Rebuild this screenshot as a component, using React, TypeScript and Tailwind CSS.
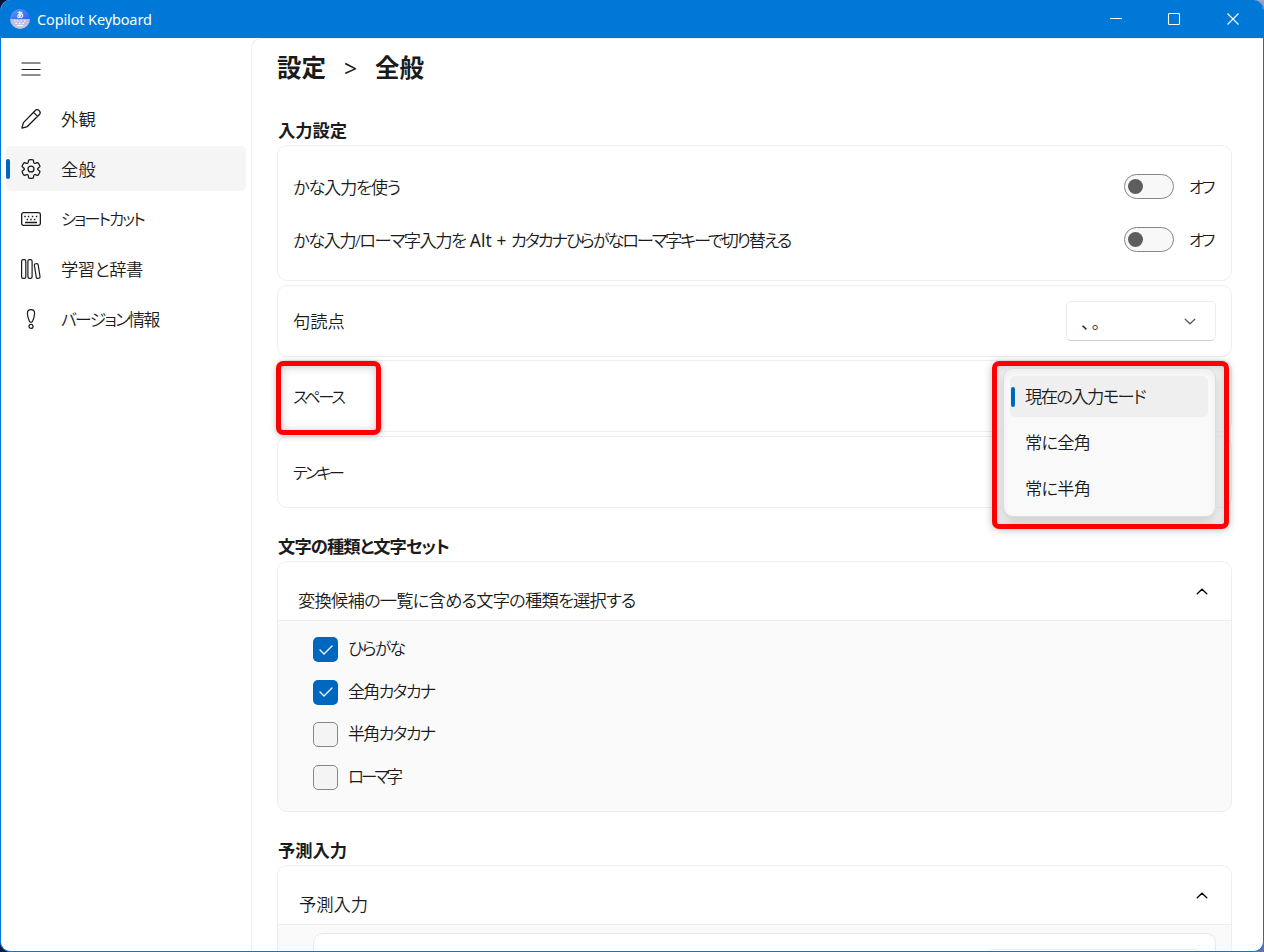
import type { ReactNode } from "react";

const GearIcon = () => (
  <svg className="size-[22px] shrink-0" viewBox="0 0 20 20" fill="none" stroke="currentColor" strokeWidth="1.15">
    <path d="M1.91 7.38A8.5 8.5 0 0 1 3.7 4.3a.5.5 0 0 1 .54-.13l1.92.68a1 1 0 0 0 1.32-.76l.36-2a.5.5 0 0 1 .4-.4 8.53 8.53 0 0 1 3.55 0c.2.04.35.2.38.4l.37 2a1 1 0 0 0 1.32.76l1.92-.68a.5.5 0 0 1 .54.13 8.5 8.5 0 0 1 1.78 3.08c.06.2 0 .4-.15.54l-1.56 1.32a1 1 0 0 0 0 1.52l1.56 1.32a.5.5 0 0 1 .15.54 8.5 8.5 0 0 1-1.78 3.08.5.5 0 0 1-.54.13l-1.92-.68a1 1 0 0 0-1.32.76l-.37 2a.5.5 0 0 1-.38.4 8.53 8.53 0 0 1-3.56 0 .5.5 0 0 1-.39-.4l-.36-2a1 1 0 0 0-1.32-.76l-1.92.68a.5.5 0 0 1-.54-.13 8.5 8.5 0 0 1-1.78-3.08.5.5 0 0 1 .15-.54l1.56-1.32a1 1 0 0 0 0-1.52L2.06 7.92a.5.5 0 0 1-.15-.54Z" />
    <circle cx="10" cy="10" r="2.7" />
  </svg>
);

const PencilIcon = () => (
  <svg className="size-5" viewBox="0 0 20 20" fill="none" stroke="currentColor" strokeWidth="1.3" strokeLinejoin="round">
    <path d="M14 1.7a2.7 2.7 0 0 1 4.2 0 2.9 2.9 0 0 1 0 4.1L6.6 17.3a2 2 0 0 1-.9.5L.9 19.1l1.3-4.8a2 2 0 0 1 .5-.9L14 1.7ZM12.6 3.4l4 4" />
  </svg>
);

const KeyboardIcon = () => (
  <svg className="size-5" viewBox="0 0 20 20" fill="none" stroke="currentColor" strokeWidth="1.3">
    <rect x="0.65" y="3.65" width="18.7" height="12.7" rx="1.8" />
    <path d="M4 13.5h12" />
    <path d="M3.3 7.5h1.5M6.8 7.5h1.5M10.8 7.5h1.5M14.8 7.5h1.5M5.6 10.5h1.5M9.2 10.5h1.5M12.8 10.5h1.5" strokeWidth="1.5" />
  </svg>
);

const BooksIcon = () => (
  <svg className="size-5" viewBox="0 0 20 20" fill="none" stroke="currentColor" strokeWidth="1.2">
    <rect x="0.6" y="0.6" width="4.2" height="18.8" rx="1.6" />
    <rect x="6.9" y="0.6" width="4.2" height="18.8" rx="1.6" />
    <rect x="14.3" y="4.6" width="3.8" height="14.8" rx="1.5" transform="rotate(-9 16.2 12)" />
  </svg>
);

const ImportantIcon = () => (
  <svg className="size-5" viewBox="0 0 20 20" fill="none" stroke="currentColor" strokeWidth="1.2">
    <path d="M10 .6c2.2 0 3.6 1.5 3.6 3.7 0 2.6-1 5.7-2 8-.3.7-.8 1.1-1.6 1.1s-1.3-.4-1.6-1.1c-1-2.3-2-5.4-2-8C6.400 2.100 7.800.6 10 .6Z" />
    <circle cx="10" cy="17.4" r="2" />
  </svg>
);

const Chevron = ({ up = false }: { up?: boolean }) => (
  <svg
    className={up ? "h-[7px] w-3 text-black" : "h-[7px] w-3 text-[#5c5c5c]"}
    viewBox="0 0 12 7"
    fill="none"
    stroke="currentColor"
    strokeWidth="1.3"
    strokeLinecap="round">
    <path d={up ? "M1.2 5.7 6 1.2l4.8 4.5" : "M1.2 1.2 6 5.8l4.8-4.6"} />
  </svg>
);

const AppLogo = () => (
  <svg className="size-5" viewBox="0 0 20 20">
    <defs>
      <linearGradient id="logo-top" x1="0" y1="0" x2="1" y2="1">
        <stop offset="0" stopColor="#5aa0f5" />
        <stop offset="1" stopColor="#2f5ff0" />
      </linearGradient>
      <linearGradient id="logo-bottom" x1="0" y1="0" x2="0" y2="1">
        <stop offset="0" stopColor="#b4bce8" />
        <stop offset="1" stopColor="#c9c6d6" />
      </linearGradient>
    </defs>
    <path d="M0 10a10 10 0 0 1 20 0Z" fill="url(#logo-top)" />
    <path d="M0 10a10 10 0 0 0 20 0Z" fill="url(#logo-bottom)" />
    <text x="10" y="8.3" fontSize="7" fontWeight="700" textAnchor="middle" fill="#fff">
      あ
    </text>
    <path
      d="M4 12h1.5M7 12h1.5M10.5 12H12M14 12h1.5M5.5 14.3H7M9 14.3h1.5M12.5 14.3H14M7 16.5h6"
      stroke="#fff"
      strokeWidth="1.2"
    />
  </svg>
);

const navItems = [
  { label: "外観", icon: <PencilIcon />, text: "tracking-[0.3px]" },
  { label: "全般", icon: <GearIcon />, text: "tracking-[0.3px]", active: true },
  { label: "ショートカット", icon: <KeyboardIcon />, text: "text-[16.3px] tracking-[-1.9px]" },
  { label: "学習と辞書", icon: <BooksIcon />, text: "tracking-[-0.5px]" },
  { label: "バージョン情報", icon: <ImportantIcon />, text: "text-[16.8px] tracking-[-1.7px]" },
];

const charTypes = [
  { label: "ひらがな", checked: true, text: "text-[16.8px] tracking-[-1.8px]", height: "h-[43px]" },
  { label: "全角カタカナ", checked: true, text: "text-[17px] tracking-[-1.7px]", height: "h-[42px]" },
  { label: "半角カタカナ", checked: false, text: "text-[17px] tracking-[-1.7px]", height: "h-[43px]" },
  { label: "ローマ字", checked: false, text: "text-[16.5px] tracking-[-2.9px]", height: "h-[43px]" },
];

const modes = [
  { label: "現在の入力モード", text: "tracking-[-1.6px]", selected: true },
  { label: "常に全角", text: "tracking-[-0.8px]" },
  { label: "常に半角", text: "tracking-[-0.8px]" },
];

function Toggle() {
  return (
    <div className="flex items-center gap-[15px]">
      <div className="flex h-[25px] w-[50px] items-center rounded-full border border-[#868686] bg-[#f8f8f8] pl-[3px]">
        <div className="size-[15px] rounded-full bg-[#5d5d5d]" />
      </div>
      <span className="w-[27px] pt-[2px] text-[16.3px] tracking-[-2.2px]">オフ</span>
    </div>
  );
}

function ComboBox({ children, wide = false }: { children?: ReactNode; wide?: boolean }) {
  return (
    <div
      className={`flex h-10 items-center justify-between rounded-[5px] border border-[#ececec] border-b-[#cfcfcf] bg-white pr-[19px] pl-[14px] ${
        wide ? "w-[213px]" : "w-[150px]"
      }`}>
      {children}
    </div>
  );
}

function SectionTitle({ children, className }: { children: ReactNode; className: string }) {
  return <h2 className={`h-[30px] pt-px pl-px leading-[29px] font-bold ${className}`}>{children}</h2>;
}

export default function App() {
  return (
    <div className="h-[952px] w-[1264px] overflow-hidden bg-[linear-gradient(100deg,#0b1238_0_10%,#d8d8d8_60%_80%,#7a6aa8_95%)] font-['Noto_Sans','Noto_Sans_CJK_JP',sans-serif] text-[17.3px] font-[350] text-[#1b1b1b] [font-feature-settings:'palt']">
      <div className="flex h-full flex-col overflow-hidden rounded-[10px] border-x border-b border-[#0078d7] bg-white">
        <header className="flex h-[38px] shrink-0 items-center bg-[#0078d7] pl-[9px] text-white">
          <AppLogo />
          <span className="ml-[7px] flex-1 pt-[2px] text-[14.5px] font-normal tracking-[-0.13px]">Copilot Keyboard</span>
          <svg className="mr-[23px] h-3 w-[131px]" viewBox="0 0 131 12" fill="none" stroke="currentColor" strokeWidth="1.1">
            <path d="M1 5.5h12" />
            <rect x="59.5" y="0.5" width="11" height="11" rx="1" />
            <path d="m118.5.5 11 11m0-11-11 11" />
          </svg>
        </header>

        <div className="flex min-h-0 flex-1">
          <nav className="w-[250px] shrink-0 px-[5px]">
            <div className="flex h-[58px] items-start pt-[24px] pl-[15px]">
              <svg className="h-[14px] w-5" viewBox="0 0 20 14" stroke="currentColor" strokeWidth="1.2">
                <path d="M.5 1h19M.5 7.5h19M.5 13h19" />
              </svg>
            </div>
            <div className="flex flex-col gap-[5px]">
              {navItems.map((item) => (
                <div
                  key={item.label}
                  className={`flex h-[45px] w-[240px] items-center rounded-[5px] ${item.active ? "bg-[#f5f5f5]" : ""}`}>
                  <div className={`h-5 w-1 rounded-full ${item.active ? "bg-[#0067c0]" : ""}`} />
                  <div className="ml-[11px] flex w-5 justify-center">{item.icon}</div>
                  <span className={`ml-5 pt-[2px] whitespace-nowrap ${item.text}`}>{item.label}</span>
                </div>
              ))}
            </div>
          </nav>

          <main className="min-w-0 flex-1 overflow-hidden rounded-tl-[10px] border-t border-l border-[#eeeeee] pr-[31px] pl-[25px]">
            <h1 className="mt-[9px] flex h-10 items-center pt-px text-[24.5px] font-bold">
              <span>設定</span>
              <span className="mr-[16px] ml-[18px] w-[15px] text-[23px] font-normal">&gt;</span>
              <span>全般</span>
            </h1>

            <SectionTitle className="mt-[27px]">入力設定</SectionTitle>
            <section className="flex h-[136px] flex-col rounded-[10px] border border-[#eeeeee] pt-[14px] pr-[15px] pl-[15px]">
              <div className="flex h-[53px] items-center justify-between">
                <span className="pt-[2px] tracking-[-1.3px]">かな入力を使う</span>
                <Toggle />
              </div>
              <div className="flex h-[53px] items-center justify-between">
                <span className="pt-[2px] tracking-[-1.6px] whitespace-pre">
                  かな入力/ローマ字入力を
                  <span className="font-normal tracking-[0.1px]"> Alt + </span>
                  <span className="tracking-[-2.2px]">カタカナひらがなローマ字キーで切り替える</span>
                </span>
                <Toggle />
              </div>
            </section>

            <section className="mt-1 flex h-[72px] items-center justify-between rounded-[10px] border border-[#eeeeee] pr-[15px] pl-[15px]">
              <span className="pt-[2px]">句読点</span>
              <ComboBox>
                <span className="pt-1 tracking-[2px] [font-feature-settings:normal]">、。</span>
                <Chevron />
              </ComboBox>
            </section>

            <section className="relative mt-[3px] flex h-[72px] items-center justify-between rounded-[10px] border border-[#eeeeee] pr-[15px] pl-[15px]">
              <span className="pt-[3px] text-[16.3px] tracking-[-2.3px]">スペース</span>
              <ComboBox wide />
              <div className="absolute top-0 -left-[2px] h-[74px] w-[105px] rounded-[7px] border-5 border-[#ff0000] shadow-[0_1px_6px_rgba(0,0,0,0.25),inset_0_1px_8px_rgba(0,0,0,0.22)]" />

              <div className="absolute top-0 right-[2px] z-10 h-[168px] w-[237px] rounded-[7px] border-5 border-[#ff0000] bg-[#ededed]/70 px-[6px] shadow-[0_1px_8px_rgba(0,0,0,0.25),inset_0_1px_8px_rgba(0,0,0,0.15)]">
                <div className="mt-[2px] flex h-[149px] w-[213px] flex-col gap-[5px] rounded-[10px] border border-[#dcdcdc] bg-[#f9f9f9] px-[6px] pt-[7px] shadow-[0_5px_8px_rgba(0,0,0,0.14),inset_0_3px_6px_rgba(0,0,0,0.05)]">
                  {modes.map((mode) => (
                    <div
                      key={mode.label}
                      className={`flex h-[41px] w-[198px] items-center rounded-[5px] pl-[1px] ${mode.selected ? "bg-[#efefef]" : ""}`}>
                      <div className={`h-5 w-1 rounded-full ${mode.selected ? "bg-[#0067c0]" : ""}`} />
                      <span className={`ml-[10px] ${mode.text}`}>{mode.label}</span>
                    </div>
                  ))}
                </div>
              </div>
            </section>

            <section className="mt-1 flex h-[72px] items-center justify-between rounded-[10px] border border-[#eeeeee] pr-[15px] pl-[15px]">
              <span className="pt-[3px] text-[16.3px] tracking-[-2.9px]">テンキー</span>
              <ComboBox wide />
            </section>

            <SectionTitle className="mt-[23px] tracking-[-0.9px]">文字の種類と文字セット</SectionTitle>
            <section className="h-[251px] overflow-hidden rounded-[10px] border border-[#eeeeee] bg-[#fafafa]">
              <div className="flex h-[59px] items-center justify-between border-b border-[#eeeeee] bg-white pr-[23px] pl-[20px]">
                <span className="pt-[19px] tracking-[-0.8px]">変換候補の一覧に含める文字の種類を選択する</span>
                <Chevron up />
              </div>
              <div className="pt-[7px] pl-[35px]">
                {charTypes.map((type) => (
                  <div key={type.label} className={`flex items-center gap-[10px] ${type.height}`}>
                    {type.checked ? (
                      <div className="flex size-[25px] items-center justify-center rounded-[5px] bg-[#0067c0]">
                        <svg className="h-[10px] w-[14px]" viewBox="0 0 14 10" fill="none" stroke="#fff" strokeWidth="1.3" strokeLinecap="round" strokeLinejoin="round">
                          <path d="m1 5 4 4 8-8" />
                        </svg>
                      </div>
                    ) : (
                      <div className="size-[25px] rounded-[5px] border border-[#868686] bg-[#f4f4f4]" />
                    )}
                    <span className={`pb-px ${type.text}`}>{type.label}</span>
                  </div>
                ))}
              </div>
            </section>

            <SectionTitle className="mt-[23px]">予測入力</SectionTitle>
            <section className="h-[251px] overflow-hidden rounded-[10px] border border-[#eeeeee] bg-[#fafafa]">
              <div className="flex h-[59px] items-center justify-between border-b border-[#eeeeee] bg-white pr-[23px] pl-[21px]">
                <span className="pt-[19px]">予測入力</span>
                <Chevron up />
              </div>
              <div className="mt-2 mr-[15px] ml-[35px] flex h-[72px] justify-end rounded-[10px] border border-[#e8e8e8] bg-white pt-[15px] pr-[15px]">
                <ComboBox wide />
              </div>
            </section>
          </main>
        </div>
      </div>
    </div>
  );
}
